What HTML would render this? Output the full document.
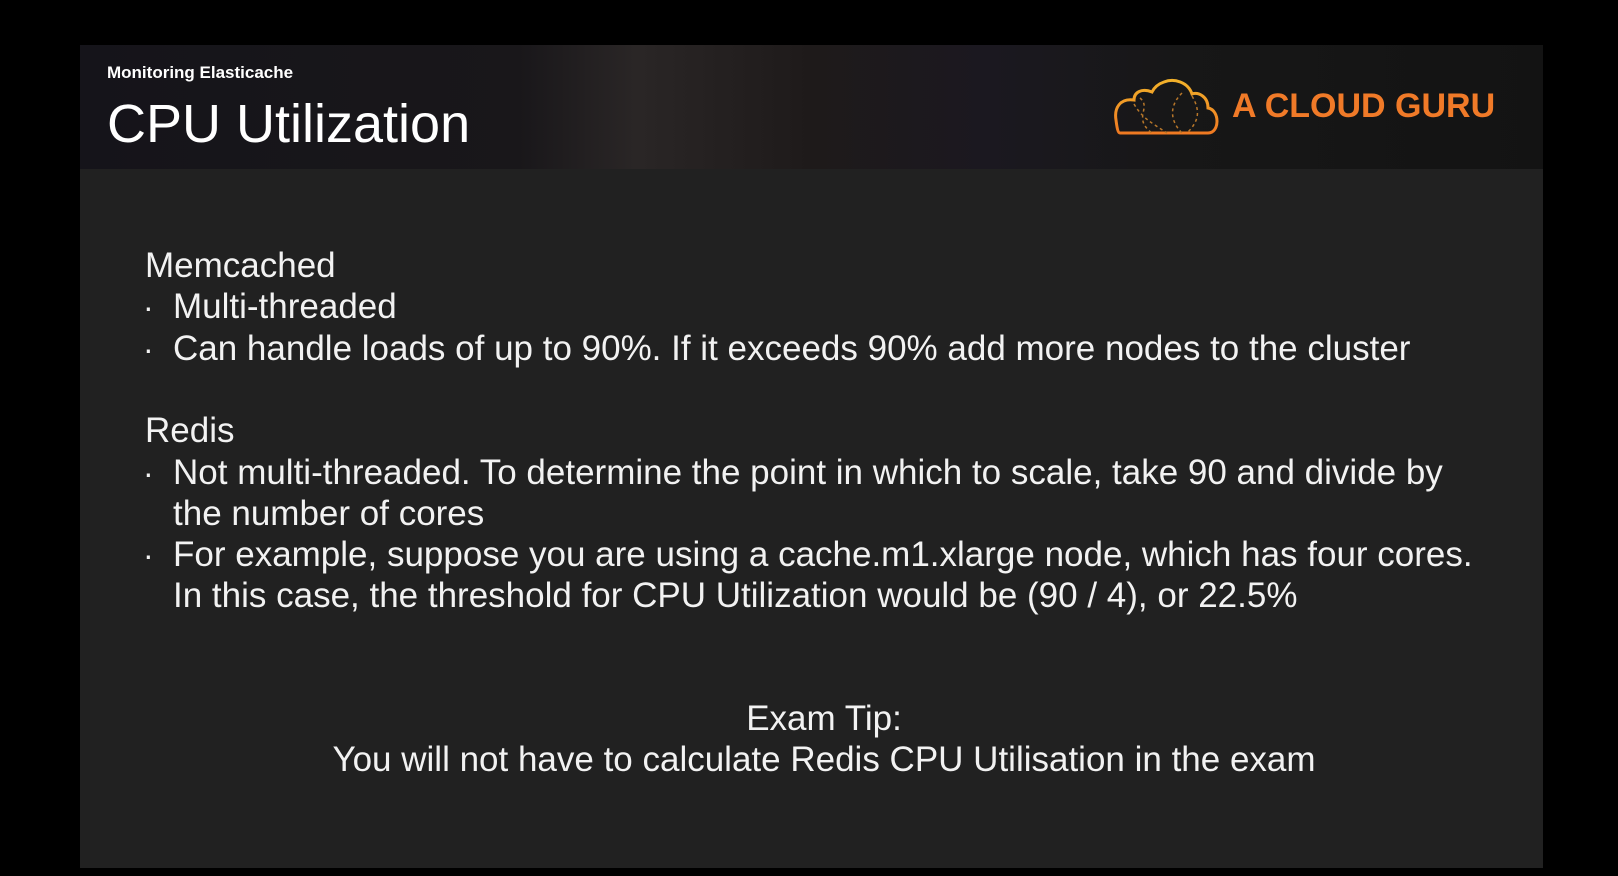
<!DOCTYPE html>
<html><head><meta charset="utf-8"><style>
html,body{margin:0;padding:0;background:#000;width:1618px;height:876px;overflow:hidden;font-family:"Liberation Sans",sans-serif;}
.slide{position:absolute;left:80px;top:45px;width:1463px;height:823px;background:#212121;}
.hdr{position:absolute;left:0;top:0;width:1463px;height:124px;background:linear-gradient(90deg,#15141a 0%,#19171a 30%,#2a2626 38%,#1e1a1a 50%,#1b1820 62%,#171717 75%,#131313 100%);}
.t{position:absolute;color:#f2f2f2;white-space:nowrap;}
.sub{left:27px;top:18px;font-size:17px;font-weight:bold;color:#fff;}
.title{left:27px;top:48px;font-size:54px;color:#fff;}
.b{font-size:35px;}
.dot{font-size:32px;}
.logo{position:absolute;left:1232px;top:87px;font-size:34px;font-weight:bold;color:#f07a28;}
</style></head><body>
<div class="slide"><div class="hdr"></div>
<div class="t sub">Monitoring Elasticache</div>
<div class="t title">CPU Utilization</div>
</div>
<svg style="position:absolute;left:1112px;top:78px" width="108" height="58" viewBox="0 0 108 58">
<defs><linearGradient id="g" x1="0" y1="0" x2="0" y2="1"><stop offset="0" stop-color="#f2b12a"/><stop offset="1" stop-color="#ef7a22"/></linearGradient></defs>
<path d="M8 55 H96 C108 55 108 32 96 30 C96 18 86 14 80 16 C76 4 62 0 52 4 C46 6 42 10 40 14 C30 10 22 14 22 22 C8 20 2 30 4 42 C5 50 6 55 8 55 Z" fill="none" stroke="url(#g)" stroke-width="3"/>
<path d="M28 20 C40 30 20 40 40 55 M22 26 C30 40 40 45 55 55 M70 15 C55 30 60 45 70 55 M80 18 C90 35 85 45 75 55" fill="none" stroke="#b8772a" stroke-width="1.5" stroke-dasharray="3 3"/>
</svg>
<div class="logo">A CLOUD GURU</div>
<div class="t b" style="left:145px;top:246px">Memcached</div>
<div class="t dot" style="left:143px;top:289px">·</div><div class="t b" style="left:173px;top:287px">Multi-threaded</div>
<div class="t dot" style="left:143px;top:331px">·</div><div class="t b" style="left:173px;top:329px">Can handle loads of up to 90%. If it exceeds 90% add more nodes to the cluster</div>
<div class="t b" style="left:145px;top:411px">Redis</div>
<div class="t dot" style="left:143px;top:455px">·</div><div class="t b" style="left:173px;top:453px">Not multi-threaded. To determine the point in which to scale, take 90 and divide by</div>
<div class="t b" style="left:173px;top:494px">the number of cores</div>
<div class="t dot" style="left:143px;top:537px">·</div><div class="t b" style="left:173px;top:535px">For example, suppose you are using a cache.m1.xlarge node, which has four cores.</div>
<div class="t b" style="left:173px;top:576px">In this case, the threshold for CPU Utilization would be (90 / 4), or 22.5%</div>
<div class="t b" style="left:0;width:1648px;text-align:center;top:699px">Exam Tip:</div>
<div class="t b" style="left:0;width:1648px;text-align:center;top:740px">You will not have to calculate Redis CPU Utilisation in the exam</div>
</body></html>
